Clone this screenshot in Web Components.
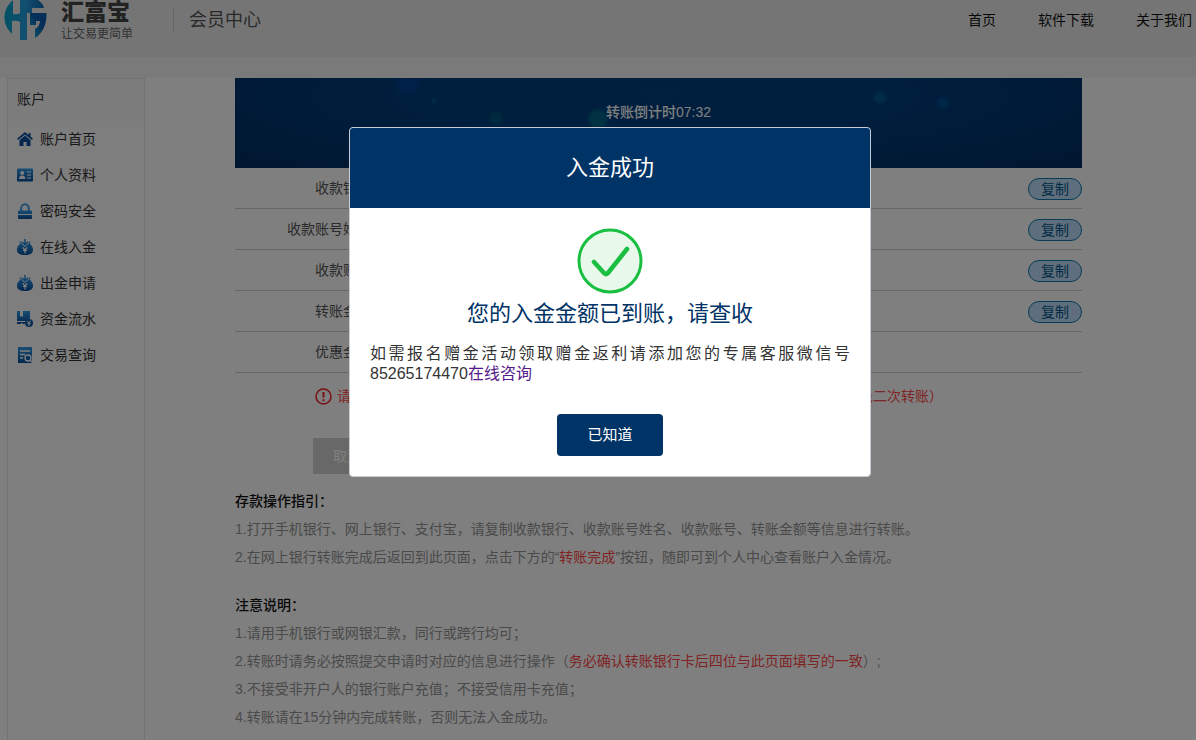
<!DOCTYPE html>
<html lang="zh-CN">
<head>
<meta charset="utf-8">
<title>会员中心</title>
<style>
html,body{margin:0;height:100%}
body{font:14px/20px "Liberation Sans","Noto Sans CJK SC",sans-serif;color:#333;background:#fff;overflow:hidden}
</style>
</head>
<body>
<member-page></member-page>
<script>
const define=(name,html,setup)=>customElements.define(name,class extends HTMLElement{
  connectedCallback(){
    if(this.shadowRoot)return;
    const t=document.createElement('template');
    t.innerHTML='<style>*{box-sizing:border-box}</style>'+html;
    this.attachShadow({mode:'open'}).append(t.content.cloneNode(true));
    if(setup)setup(this,this.shadowRoot);
  }
});

const grad='<defs><linearGradient id="g" x1="0" y1="0" x2="0" y2="1"><stop offset="0" stop-color="#2f9be6"/><stop offset="1" stop-color="#0a4f9e"/></linearGradient></defs>';
const bag='<path fill="url(#g)" d="M3.500 4.500L2 2.500 5 3l3 2 3-2 3-.5-1.500 2C15 6.500 16 8.500 16 11c0 3.500-3 5-8 5s-8-1.500-8-5c0-2.500 1-4.500 3.500-6.500z"/><path d="M8 0v5.500M4.800 2.800L8 6l3.200-3.200" stroke="#fff" stroke-width="3" fill="none"/><path d="M8 0v5.500M4.800 2.800L8 6l3.200-3.200" stroke="#1d7fd0" stroke-width="1.400" fill="none"/><path d="M5.800 8.500L8 11l2.200-2.500M8 11v3.500M6 11.500h4" stroke="#fff" stroke-width="1.200" fill="none"/>';
const icons={
  home:'<path fill="#0a4f9e" d="M8 1L0 7.800l1.200 1.300L8 3.400l6.800 5.700L16 7.800l-2.500-2.200V2h-2v2z"/><path fill="#0a4f9e" d="M8 4.600L2.500 9.200V15H6.500v-4h3v4h4V9.200z"/>',
  card:'<rect y="1.500" width="16" height="13" rx="1" fill="url(#g)"/><circle cx="5.200" cy="6" r="2" fill="#fff"/><path d="M2 12c0-2.500 1.500-3.500 3.200-3.500s3.200 1 3.200 3.500zM10 4.500h4v1h-4zm0 3h4v1h-4zm0 3h4v1h-4z" fill="#fff"/>',
  lock:'<path d="M4.200 9V5.500C4.200 3 6 1.200 8 1.200s3.800 1.800 3.800 4.300V9" stroke="#3a9ae6" stroke-width="2" fill="none"/><path fill="url(#g)" d="M2 7.500h12q1 0 1 1V11H1V8.500q0-1 1-1zM1 12h14v3q0 1-1 1H2q-1 0-1-1z"/>',
  bag,
  flow:'<path fill="url(#g)" d="M0 0h3v6l1.500-1.200L6 6V0h7v7.500a5 5 0 0 0-4 2.500H0zM0 11h8l-.3 2H5.500v-1H4v1H0z"/><circle cx="12" cy="12" r="4" fill="#0a5cab"/><path d="M10.300 9.800L12 12l1.700-2.200M12 12v3M10.500 12.500h3" stroke="#fff" fill="none"/>',
  query:'<path fill="url(#g)" d="M1 0h14v16H1z"/><path d="M3 4h10M3 7.500h5M3 11h3" stroke="#fff" stroke-width="1.300"/><circle cx="11" cy="11" r="3" fill="#0d62b2" stroke="#fff" stroke-width="1.300"/><path d="M13 13l2.600 2.600" stroke="#fff" stroke-width="1.500"/>'
};

define('brand-logo',`<style>
:host{display:flex;gap:13px;align-items:flex-start}
svg{display:block;width:46px;height:44px}
.names{display:flex;flex-direction:column}
strong{font-size:23px;line-height:25px;font-weight:900;color:#444}
small{font-size:12px;line-height:18px;color:#666}
</style>
<svg viewBox="0 0 46 44" aria-hidden="true"><defs><linearGradient id="l" x1="0" y1="0" x2="46" y2="0" gradientUnits="userSpaceOnUse"><stop offset="0" stop-color="#00a3c8"/><stop offset=".5" stop-color="#24a0e0"/><stop offset="1" stop-color="#0d5cae"/></linearGradient><linearGradient id="m" x1="0" y1="1" x2="1" y2="0"><stop offset="0" stop-color="#16b4d8"/><stop offset=".6" stop-color="#0d5cae"/></linearGradient></defs>
<path fill="url(#l)" d="M11 0A22 22 0 0 0 10 34V21Q15 20 18 22V40h7V0h-7v13Q15 15 11 14z"/>
<path fill="url(#l)" d="M25 0h11q3 2 5 5l1 3H30v5h-5z"/>
<path fill="url(#m)" d="M28 13h16.500C45 24 41 33 33 38V29q5-3 5-8h-4v4h-6z"/></svg>
<div class="names"><strong>汇富宝</strong><small>让交易更简单</small></div>`);

define('site-header',`<style>
:host{display:block;background:#ebebeb}
header{height:57px;padding:0 4px 0 2px;display:flex;align-items:flex-start}
.title{margin:8px 0 0 40px;padding-left:15px;border-left:1px solid #ccc;font-size:18px;line-height:24px;color:#555}
nav{margin:10px 0 0 auto;display:flex;gap:42px}
a{color:#111;text-decoration:none}
</style>
<header><brand-logo></brand-logo><div class="title">会员中心</div>
<nav><a href="#">首页</a><a href="#">软件下载</a><a href="#">关于我们</a></nav></header>`);

define('menu-item',`<style>
:host{display:block}
a{display:flex;align-items:center;gap:7px;height:36px;padding-left:9px;color:#333;text-decoration:none}
svg{width:16px;height:16px}
</style><a href="#"><svg viewBox="0 0 16 16" aria-hidden="true"></svg><slot></slot></a>`,
(el,root)=>{root.querySelector('svg').innerHTML=grad+icons[el.getAttribute('icon')]});

define('side-menu',`<style>
:host{display:block;flex:none;width:138px;margin-left:7px;background:#fdfdfd;border:1px solid #e4e4e4;border-bottom:0}
h2{margin:0;padding:0 0 2px 9px;font-size:14px;line-height:40px;font-weight:400;background:#f8f8f8}
</style>
<h2>账户</h2><nav>
<menu-item icon="home">账户首页</menu-item><menu-item icon="card">个人资料</menu-item><menu-item icon="lock">密码安全</menu-item><menu-item icon="bag">在线入金</menu-item><menu-item icon="bag">出金申请</menu-item><menu-item icon="flow">资金流水</menu-item><menu-item icon="query">交易查询</menu-item></nav>`);

define('countdown-banner',`<style>
:host{display:block;height:90px;padding-top:24px;text-align:center;color:#fff;font-weight:500;
background:radial-gradient(circle at 173px 6px,#004090 0 8px,#00409000 14px),radial-gradient(circle at 126px 23px,#00408000 0 4px,#00408000 8px),radial-gradient(circle at 199px 23px,#00508c 0 2px,#00508c00 4px),radial-gradient(circle at 261px 40px,#00507c 0 5px,#00507c00 9px),radial-gradient(circle at 363px 41px,#006488 0 7px,#00648800 12px),radial-gradient(circle at 645px 19px,#005890 0 4px,#00589000 8px),radial-gradient(circle at 708px 25px,#004c90 0 4px,#004c9000 7px),radial-gradient(ellipse at 50% 20%,#004080,#003c7c 40%,#002e60)}
</style><slot></slot>`);

define('transfer-details',`<style>
:host{display:block}
table{width:100%;border-spacing:0}
th,td{height:41px;padding:0;border-bottom:1px solid #ccc}
th{width:136px;font-weight:400;text-align:right;color:#555}
td{padding-top:2px;text-align:right}
button{display:block;margin-left:auto;width:54px;height:22px;padding:0;border:1px solid #0e7cad;border-radius:11px;background:#bcdcf8;color:#04588a;font:14px/20px "Liberation Sans","Noto Sans CJK SC",sans-serif}
</style><table><tbody></tbody></table>`,
(el,root)=>{root.querySelector('tbody').innerHTML=['收款银行','收款账号姓名','收款账号','转账金额','优惠金额'].map((t,i)=>`<tr><th scope="row">${t}</th><td>${i<4?`<button type="button" aria-label="复制${t}">复制</button>`:''}</td></tr>`).join('')});

define('warning-note',`<style>
:host{display:flex;align-items:center;gap:5px;margin:13px 0 0 80px;color:#ff4848;white-space:nowrap}
svg{width:17px;height:17px;flex:none}
</style><svg viewBox="0 0 17 17" aria-hidden="true"><circle cx="8.500" cy="8.500" r="7.500" fill="none" stroke="#f0202c" stroke-width="1.500"/><path d="M8.500 4v5.500M8.500 11.200v2" stroke="#f0202c" stroke-width="2"/></svg><span><slot></slot></span>`);

define('form-actions',`<style>
:host{display:flex;gap:20px;margin:32px 0 0 78px}
button{height:36px;padding:0 20px;border:0;background:#d0d0d0;color:#fff;font:14px/20px "Liberation Sans","Noto Sans CJK SC",sans-serif}
.done{background:#036}
</style><button type="button">取消转账</button><button type="button" class="done">转账完成</button>`);

define('guide-section',`<style>
:host{display:block;line-height:28px;color:#949494}
h3{margin:0;font-size:14px;line-height:28px;font-weight:500;color:#111}
</style><h3><slot name="title"></slot></h3><slot></slot>`);

define('deposit-panel',`<style>
:host{display:block;flex:1;min-width:0;padding:0 114px 0 90px}
.guides{display:grid;gap:20px;margin-top:13px}
p{margin:0}
em{font-style:normal;color:#ff4848}
</style>
<countdown-banner>转账倒计时07:32</countdown-banner>
<transfer-details></transfer-details>
<warning-note>请务必按照以上信息转账， 转账金额须与页面显示一致（超时请重新提交订单，请避免二次转账）</warning-note>
<form-actions></form-actions>
<div class="guides">
<guide-section><span slot="title">存款操作指引：</span>
<p>1.打开手机银行、网上银行、支付宝，请复制收款银行、收款账号姓名、收款账号、转账金额等信息进行转账。</p>
<p>2.在网上银行转账完成后返回到此页面，点击下方的“<em>转账完成</em>”按钮，随即可到个人中心查看账户入金情况。</p></guide-section>
<guide-section><span slot="title">注意说明：</span>
<p>1.请用手机银行或网银汇款，同行或跨行均可；</p>
<p>2.转账时请务必按照提交申请时对应的信息进行操作（<em>务必确认转账银行卡后四位与此页面填写的一致</em>）;</p>
<p>3.不接受非开户人的银行账户充值；不接受信用卡充值；</p>
<p>4.转账请在15分钟内完成转账，否则无法入金成功。</p></guide-section>
</div>`);

define('success-dialog',`<style>
:host{position:fixed;inset:0;display:flex;justify-content:center;align-items:flex-start;padding:127px 0 0 24px;background:rgba(0,0,0,.5)}
section{width:522px;border:1px solid #c8ccd4;border-radius:4px;background:#fff;overflow:hidden}
h2{margin:0;background:#036;color:#fff;font-size:22px;line-height:80px;font-weight:400;text-align:center}
.body{padding:20px;display:flex;flex-direction:column;align-items:center}
svg{width:66px;height:66px}
h3{margin:4px 0 0;font-size:22px;line-height:32px;font-weight:400;color:#036}
p{margin:14px 0 0;font-size:16px;line-height:20px;text-align:justify;color:#333}
a{color:#551a8b;text-decoration:none}
button{margin-top:30px;height:42px;padding:0 30px;border:0;border-radius:4px;background:#036;color:#fff;font:15px/20px "Liberation Sans","Noto Sans CJK SC",sans-serif}
</style>
<section role="dialog" aria-modal="true" aria-labelledby="t"><h2 id="t">入金成功</h2>
<div class="body"><svg viewBox="0 0 66 66" aria-hidden="true"><circle cx="33" cy="33" r="31" fill="#e8f9ec" stroke="#1abf41" stroke-width="3"/><path d="M17 34l10.500 11.500q1.500 1.500 3 0L50 21" fill="none" stroke="#1abf41" stroke-width="4.500" stroke-linecap="round" stroke-linejoin="round"/></svg>
<h3>您的入金金额已到账，请查收</h3>
<p>如需报名赠金活动领取赠金返利请添加您的专属客服微信号85265174470<a href="#">在线咨询</a></p>
<button type="button">已知道</button></div></section>`);

define('member-page',`<style>
:host{display:flex;flex-direction:column;min-height:100vh;background:#fff}
main{flex:1;display:flex;border-top:21px solid #f5f5f5}
</style>
<site-header></site-header><main><side-menu></side-menu><deposit-panel></deposit-panel></main><success-dialog></success-dialog>`);
</script>
</body>
</html>
